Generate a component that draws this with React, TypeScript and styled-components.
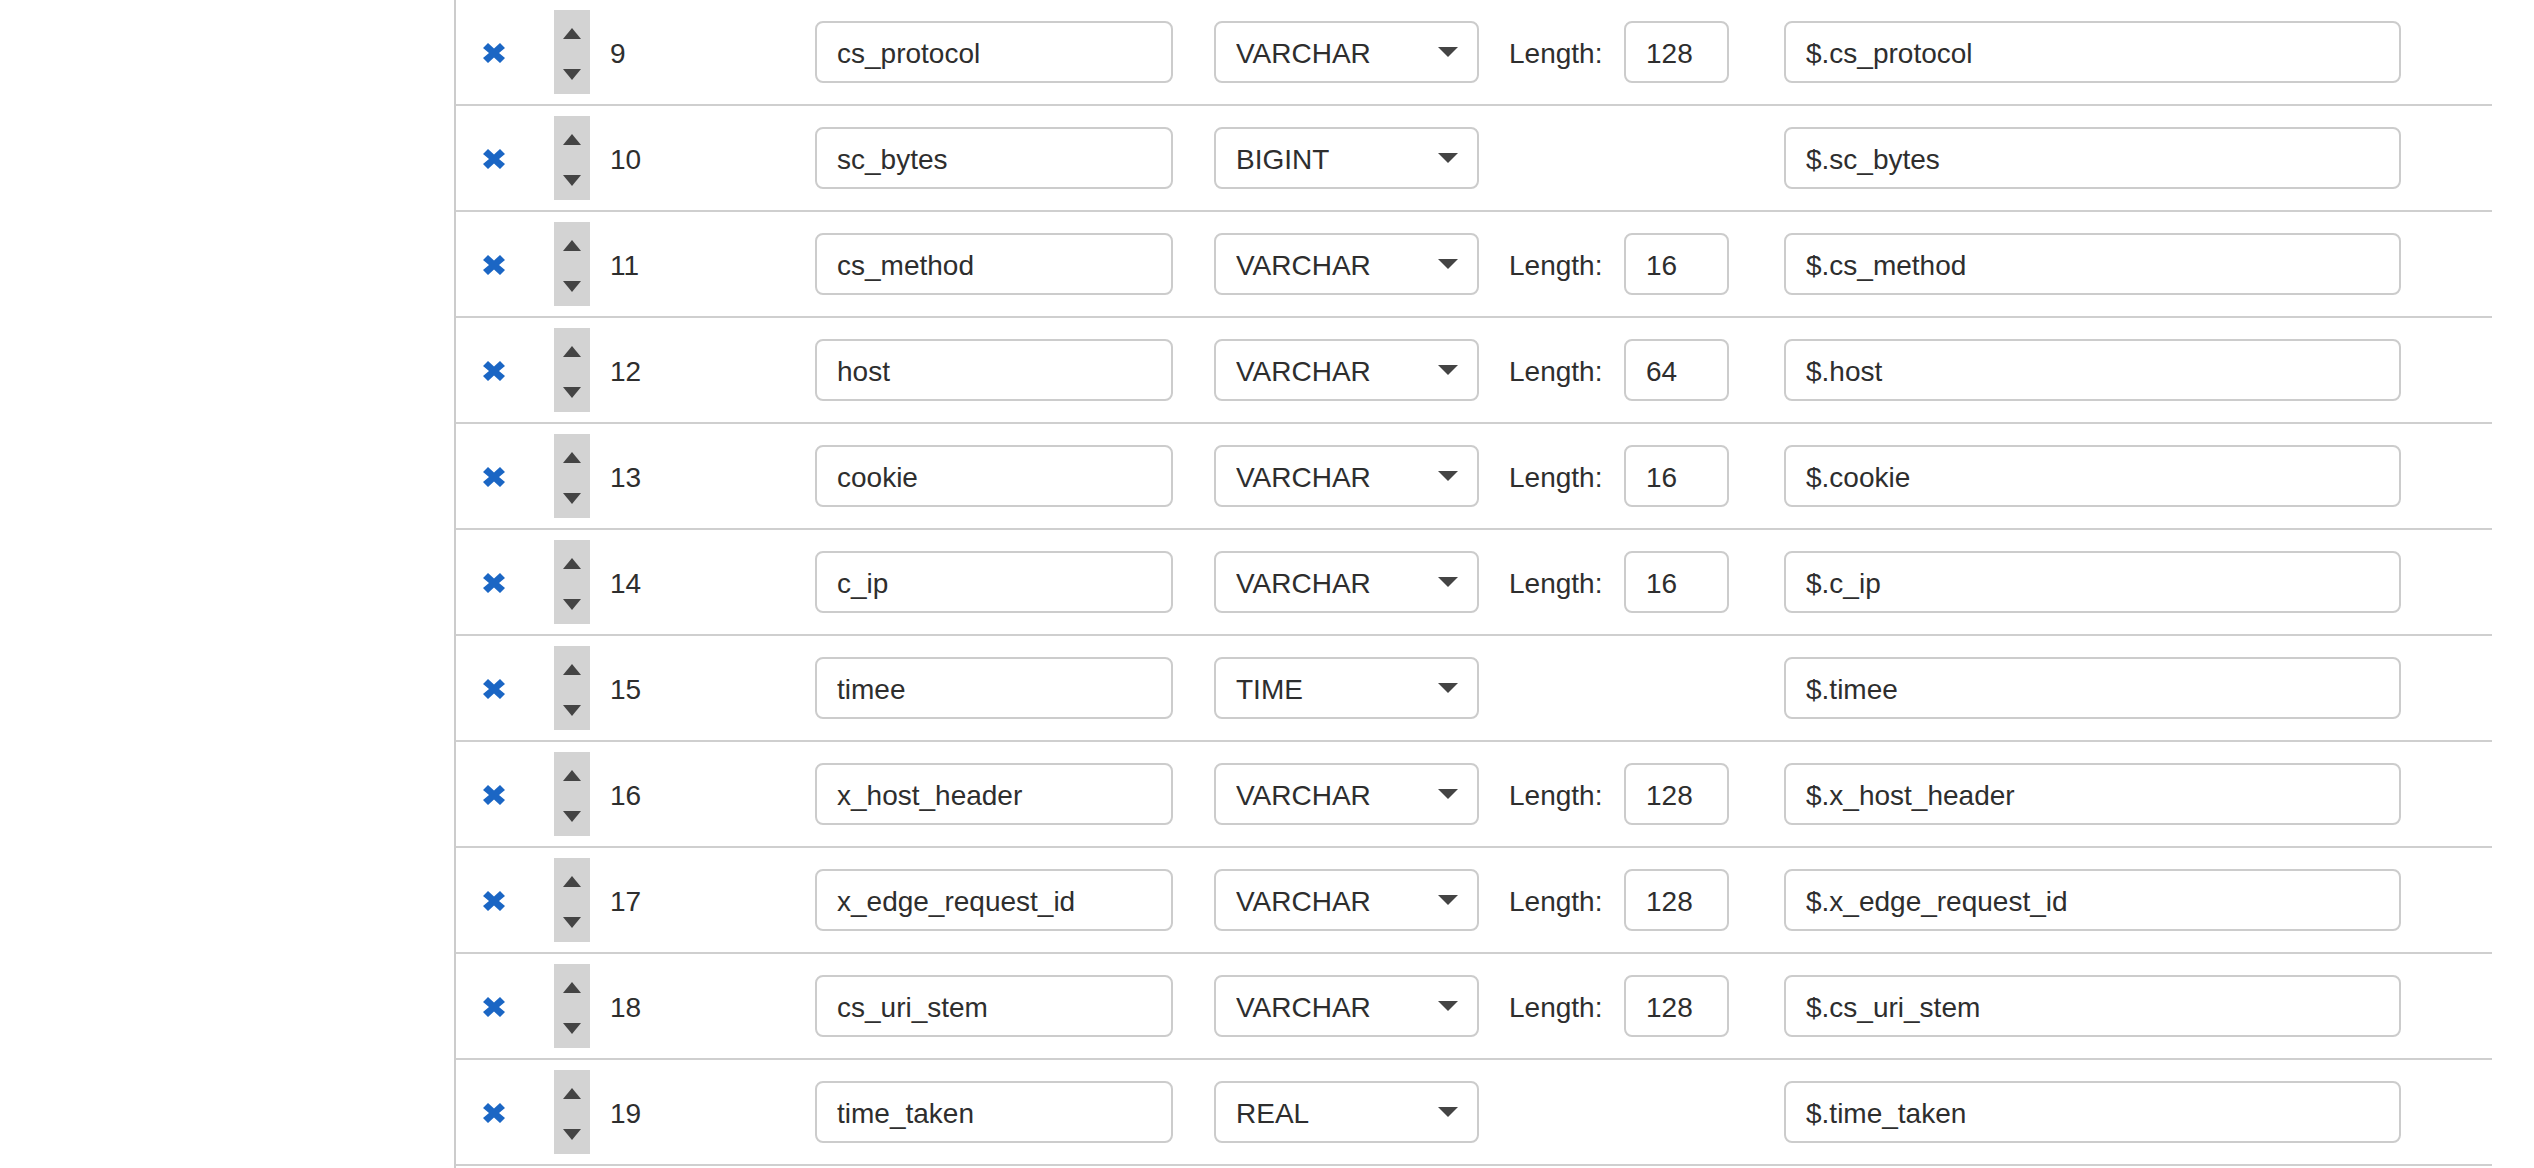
import React from "react";
import styled, { createGlobalStyle } from "styled-components";

const GlobalStyle = createGlobalStyle`
  html, body {
    margin: 0;
    padding: 0;
    background: #fff;
    overflow: hidden;
  }
  body {
    font-family: "Liberation Sans", Arial, sans-serif;
    color: #333;
  }
`;

type Column = {
  name: string;
  type: string;
  length?: string;
};

const columns: Column[] = [
  { name: "cs_protocol", type: "VARCHAR", length: "128" },
  { name: "sc_bytes", type: "BIGINT" },
  { name: "cs_method", type: "VARCHAR", length: "16" },
  { name: "host", type: "VARCHAR", length: "64" },
  { name: "cookie", type: "VARCHAR", length: "16" },
  { name: "c_ip", type: "VARCHAR", length: "16" },
  { name: "timee", type: "TIME" },
  { name: "x_host_header", type: "VARCHAR", length: "128" },
  { name: "x_edge_request_id", type: "VARCHAR", length: "128" },
  { name: "cs_uri_stem", type: "VARCHAR", length: "128" },
  { name: "time_taken", type: "REAL" },
];

const Page = styled.div`
  display: flex;
  width: 2534px;
  min-height: 1168px;
`;

const Sidebar = styled.div`
  width: 454px;
  flex: none;
`;

const Table = styled.div`
  width: 2036px;
  border-left: 2px solid #cccccc;
  display: flex;
  flex-direction: column;
`;

const Row = styled.div`
  display: grid;
  grid-template-columns: 98px 56px 205px 399px 295px 115px 160px 617px 1fr;
  align-items: center;
  height: 104px;
  border-bottom: 2px solid #cfcfcf;
`;

const RemoveButton = styled.button`
  display: flex;
  align-items: center;
  justify-content: flex-start;
  padding: 2px 0 0 27px;
  margin: 0;
  border: none;
  background: none;
  cursor: pointer;
  height: 100%;
`;

const Stepper = styled.div`
  display: flex;
  flex-direction: column;
  justify-content: space-between;
  align-items: center;
  width: 36px;
  height: 84px;
  box-sizing: border-box;
  padding: 18px 0 14px;
  background: #d3d3d3;
`;

const Arrow = styled.span<{ $down?: boolean }>`
  width: 0;
  height: 0;
  border-left: 9.5px solid transparent;
  border-right: 9.5px solid transparent;
  ${(p) =>
    p.$down
      ? "border-top: 11px solid #444;"
      : "border-bottom: 11px solid #444;"}
`;

const Index = styled.span`
  font-size: 28px;
  color: #2e2e2e;
  padding-top: 3px;
`;

const TextInput = styled.input<{ $width: number }>`
  width: ${(p) => p.$width}px;
  height: 62px;
  box-sizing: border-box;
  padding: 3px 20px 0;
  border: 2px solid #cccccc;
  border-radius: 8px;
  font-family: "Liberation Sans", Arial, sans-serif;
  font-size: 28px;
  color: #2e2e2e;
  background: #fff;
  outline: none;
`;

const SelectWrap = styled.div`
  position: relative;
  width: 265px;
  height: 62px;
`;

const Select = styled.select`
  appearance: none;
  -webkit-appearance: none;
  width: 100%;
  height: 100%;
  box-sizing: border-box;
  padding: 3px 20px 0;
  border: 2px solid #cccccc;
  border-radius: 8px;
  font-family: "Liberation Sans", Arial, sans-serif;
  font-size: 28px;
  color: #2e2e2e;
  background: #fff;
  outline: none;
`;

const Caret = styled.span`
  position: absolute;
  right: 21px;
  top: 26px;
  width: 0;
  height: 0;
  border-left: 10px solid transparent;
  border-right: 10px solid transparent;
  border-top: 10px solid #444;
  pointer-events: none;
`;

const Label = styled.span`
  font-size: 28px;
  color: #2e2e2e;
  padding-top: 3px;
`;

const RemoveIcon = () => (
  <svg width="22" height="20" viewBox="0 0 22 20">
    <polygon
      fill="#1b66c4"
      points="0,5 5,0 11,5.5 17,0 22,5 16,10 22,15 17,20 11,14.5 5,20 0,15 6,10"
    />
  </svg>
);

const TYPES = ["VARCHAR", "BIGINT", "TIME", "REAL"];

export default function App() {
  return (
    <>
      <GlobalStyle />
      <Page>
        <Sidebar />
        <Table>
          {columns.map((col, i) => (
            <Row key={col.name}>
              <RemoveButton aria-label="Remove column">
                <RemoveIcon />
              </RemoveButton>
              <Stepper>
                <Arrow />
                <Arrow $down />
              </Stepper>
              <Index>{i + 9}</Index>
              <TextInput $width={358} value={col.name} readOnly />
              <SelectWrap>
                <Select value={col.type} onChange={() => {}}>
                  {TYPES.map((t) => (
                    <option key={t} value={t}>
                      {t}
                    </option>
                  ))}
                </Select>
                <Caret />
              </SelectWrap>
              {col.length ? <Label>Length:</Label> : <span />}
              {col.length ? (
                <TextInput $width={105} value={col.length} readOnly />
              ) : (
                <span />
              )}
              <TextInput $width={617} value={"$." + col.name} readOnly />
              <span />
            </Row>
          ))}
        </Table>
      </Page>
    </>
  );
}
